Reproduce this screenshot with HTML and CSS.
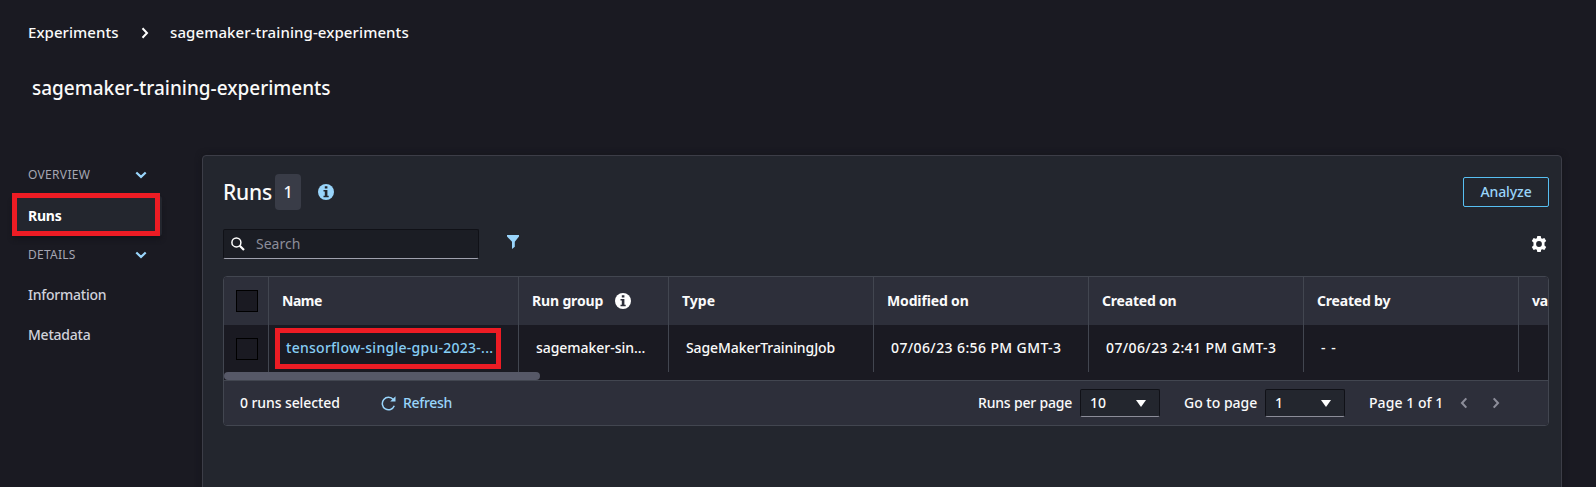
FILE: index.html
```
<!DOCTYPE html>
<html lang="en">
<head>
<meta charset="utf-8">
<title>sagemaker-training-experiments</title>
<link rel="stylesheet" href="styles.css">
</head>
<body>
<header class="header">
  <nav class="crumbs">
    <span class="crumb-root">Experiments</span>
    <svg class="crumb-sep" width="8" height="12" viewBox="0 0 8 12"><path d="M1.5 1.3 6 6 1.5 10.7" fill="none" stroke="#fff" stroke-width="2"/></svg>
    <span class="crumb-current">sagemaker-training-experiments</span>
  </nav>
  <h1 class="title">sagemaker-training-experiments</h1>
</header>
<div class="layout">
  <aside class="sidebar">
    <div class="group"><span class="ls-overview">OVERVIEW</span><svg width="12" height="8" viewBox="0 0 12 8"><path d="M1.3 1.5 6 5.9 10.7 1.5" fill="none" stroke="#99d5fb" stroke-width="2.2"/></svg></div>
    <div class="item active">Runs<i class="mark mark-nav"></i></div>
    <div class="group group-details"><span class="ls-details">DETAILS</span><svg width="12" height="8" viewBox="0 0 12 8"><path d="M1.3 1.5 6 5.9 10.7 1.5" fill="none" stroke="#99d5fb" stroke-width="2.2"/></svg></div>
    <div class="item">Information</div>
    <div class="item">Metadata</div>
  </aside>
  <main class="panel">
    <div class="panel-head">
      <h2 class="panel-title">Runs</h2>
      <span class="badge">1</span>
      <svg class="info" width="16" height="16" viewBox="0 0 16 16"><circle cx="8" cy="8" r="8" fill="#99d5fb"/><path d="M6.8 2.2h2.6v2.3H6.8zM5.5 6h3.9v5.800h1.300v1.500H5.500v-1.500h1.300V7.500H5.500z" fill="#23262e"/></svg>
      <button class="analyze">Analyze</button>
    </div>
    <div class="tools">
      <div class="search">
        <svg width="14" height="14" viewBox="0 0 14 14"><circle cx="5.4" cy="5.4" r="4.500" fill="none" stroke="#fff" stroke-width="1.500"/><path d="m8.700 8.700 4.300 4.300" stroke="#fff" stroke-width="2.200"/></svg>
        <span>Search</span>
      </div>
      <svg class="filter" width="12" height="14" viewBox="0 0 12 14"><path d="M0 0h12v1.500L7.800 6.800v5L5 14V6.800L0 1.500z" fill="#99d5fb"/></svg>
      <svg class="gear" width="16" height="16" viewBox="0 0 16 16"><path fill-rule="evenodd" fill="#fff" d="M6.300 0h3.400l.5 2.200 1 .6 2.200-.8 1.800 3-1.700 1.500v3L15.200 11l-1.800 3-2.200-.8-1 .6-.5 2.200H6.300l-.5-2.200-1-.6-2.200.8-1.800-3 1.700-1.500v-3L.8 5l1.800-3 2.200.8 1-.6zM8 5.100a2.900 2.900 0 1 0 0 5.800 2.900 2.900 0 0 0 0-5.800z"/></svg>
    </div>
    <section class="table">
      <div class="row head">
        <div class="cell check"><i class="box"></i></div>
        <div class="cell ls-name">Name</div>
        <div class="cell">Run group<svg class="info-sm" width="16" height="16" viewBox="0 0 16 16"><circle cx="8" cy="8" r="8" fill="#fff"/><path d="M6.800 2.200h2.600v2.300H6.800zM5.500 6h3.900v5.800h1.300v1.500H5.500v-1.500h1.300V7.500H5.500z" fill="#2d2f3a"/></svg></div>
        <div class="cell ls-type">Type</div>
        <div class="cell">Modified on</div>
        <div class="cell ls-created">Created on</div>
        <div class="cell ls-created">Created by</div>
        <div class="cell last">va</div>
      </div>
      <div class="row body">
        <div class="cell check"><i class="box"></i></div>
        <div class="cell link">tensorflow-single-gpu-2023-...<i class="mark mark-run"></i></div>
        <div class="cell">sagemaker-sin...</div>
        <div class="cell ls-job">SageMakerTrainingJob</div>
        <div class="cell ls-date">07/06/23 6:56 PM GMT-3</div>
        <div class="cell ls-date">07/06/23 2:41 PM GMT-3</div>
        <div class="cell ls-dash">- -</div>
        <div class="cell last"></div>
      </div>
      <div class="scroll"><div class="thumb"></div></div>
      <footer class="foot">
        <span class="selected">0 runs selected</span>
        <svg class="refresh-icon" width="15" height="15" viewBox="0 0 15 15"><path d="M12.300 3.600A6.200 6.200 0 1 0 13.300 9.800" fill="none" stroke="#99d5fb" stroke-width="1.500"/><path d="M14.500.2v5.300H9.200z" fill="#99d5fb"/></svg>
        <span class="refresh">Refresh</span>
        <span class="per-page">Runs per page</span>
        <div class="select">10<svg width="10" height="7" viewBox="0 0 10 7"><path d="M0 0h10L5 7z" fill="#fff"/></svg></div>
        <span class="goto">Go to page</span>
        <div class="select">1<svg width="10" height="7" viewBox="0 0 10 7"><path d="M0 0h10L5 7z" fill="#fff"/></svg></div>
        <span class="page-of">Page 1 of 1</span>
        <svg class="prev" width="8" height="12" viewBox="0 0 8 12"><path d="M6.300 1.400 2 6l4.300 4.600" fill="none" stroke="#8c8d99" stroke-width="2.100"/></svg>
        <svg class="next" width="8" height="12" viewBox="0 0 8 12"><path d="M1.700 1.400 6 6l-4.300 4.600" fill="none" stroke="#8c8d99" stroke-width="2.100"/></svg>
      </footer>
    </section>
  </main>
</div>
</body>
</html>
```
FILE: styles.css
```
* { box-sizing: border-box; }
body {
  margin: 0;
  height: 487px;
  overflow: hidden;
  background: #1a1a22;
  color: #fafafa;
  font: 500 14px/20px "Noto Sans", sans-serif;
}
svg { display: block; flex: none; }
span, h1, h2 { white-space: nowrap; }
.header { height: 155px; padding: 22px 0 0 28px; }
.crumbs { display: flex; align-items: center; height: 20px; font-size: 15px; }
.crumb-root { width: 113px; letter-spacing: 0.05px; }
.crumb-sep { margin: 2px 21px 0 0; }
.crumb-current { letter-spacing: 0.09px; }
.title { margin: 34px 0 0 4px; font-size: 19px; font-weight: 500; line-height: 24px; letter-spacing: -0.02px; }
.layout { display: flex; height: 340px; }
.sidebar { width: 202px; padding-top: 10px; color: #d0d1da; }
.group {
  display: flex;
  align-items: center;
  justify-content: space-between;
  height: 20px;
  padding: 0 55px 0 28px;
  font-size: 12px;
  font-weight: 400;
  color: #a5a6b2;
}
.group-details { margin: 9px 0 10px; }
.ls-overview { letter-spacing: 0.32px; }
.ls-details { letter-spacing: 0.25px; }
.item { height: 40px; padding-left: 28px; line-height: 40px; letter-spacing: -0.23px; }
.active {
  position: relative;
  width: 150px;
  height: 40px;
  margin: 11px 0 0 12px;
  padding-left: 16px;
  background: #23262e;
  border-radius: 3px;
  box-shadow: 0 4px 5px -1px #14141a;
  color: #fff;
  font-weight: 700;
}
.mark { position: absolute; border: 5px solid #ed1c24; }
.mark-nav { left: 0; top: -3px; width: 148px; height: 43px; }
.mark-run { left: 6px; top: 3px; width: 226px; height: 41px; }
.panel {
  width: 1360px;
  padding: 18px 12px 0 20px;
  background: #23262e;
  border: 1px solid #3c3d47;
  border-radius: 4px 4px 0 0;
  box-shadow: 0 0 6px #15151b;
}
.panel-head { display: flex; align-items: center; height: 36px; }
.panel-title { width: 52px; margin: 0; font-size: 21px; font-weight: 500; line-height: 30px; letter-spacing: -0.2px; }
.badge {
  width: 26px;
  height: 36px;
  background: #393c47;
  border-radius: 4px;
  font-size: 16px;
  line-height: 36px;
  text-align: center;
}
.info { margin-left: 17px; }
.analyze {
  width: 86px;
  height: 30px;
  margin-left: auto;
  padding: 0;
  background: none;
  border: 1px solid #57bff2;
  border-radius: 2px;
  color: #99d5fb;
  font: inherit;
  letter-spacing: -0.1px;
}
.tools { display: flex; align-items: center; height: 30px; margin-top: 19px; }
.search {
  display: flex;
  align-items: center;
  gap: 11px;
  width: 256px;
  height: 30px;
  padding-left: 7px;
  background: #1b1d24;
  border: 1px solid #101117;
  border-bottom-color: #a0a1ae;
  border-radius: 2px;
  color: #8c8d99;
  font-weight: 400;
}
.filter { margin: -5px 0 0 28px; }
.gear { margin: 0 2px 0 auto; }
.table {
  width: 1326px;
  height: 150px;
  margin-top: 17px;
  overflow: hidden;
  background: #1a1a22;
  border: 1px solid #424650;
  border-radius: 4px;
}
.row { display: grid; grid-template-columns: 45px 250px 150px 205px 215px 215px 215px 1fr; }
.cell { position: relative; display: flex; align-items: center; border-right: 1px solid #424650; white-space: nowrap; }
.last { border-right: 0; }
.head { height: 48px; background: #2d2f3a; font-weight: 700; letter-spacing: -0.15px; }
.head .cell { padding-left: 13px; }
.body { height: 47px; }
.body .cell { padding: 0 0 1px 17px; letter-spacing: -0.04px; }
.row .check, .body .check { padding: 0 0 0 12px; }
.box { width: 22px; height: 22px; background: #1a1a22; border: 1px solid #000; }
.info-sm { margin-left: 12px; }
.head .ls-name { letter-spacing: -0.5px; }
.head .ls-type { letter-spacing: 0; }
.head .ls-created { letter-spacing: -0.2px; }
.body .link { color: #86cdf4; letter-spacing: 0.27px; }
.body .ls-job { letter-spacing: -0.09px; }
.body .ls-date { letter-spacing: 0.39px; }
.body .ls-dash { letter-spacing: 1px; }
.scroll { height: 8px; }
.thumb { width: 316px; height: 8px; background: #565867; border-radius: 4px; }
.foot { display: flex; align-items: center; height: 45px; padding-left: 16px; background: #2d2f3a; border-top: 1px solid #424650; }
.selected { width: 141px; letter-spacing: -0.09px; }
.refresh-icon { margin-right: 7px; }
.refresh { width: 575px; color: #99d5fb; letter-spacing: -0.3px; }
.per-page { width: 102px; letter-spacing: -0.18px; }
.select {
  display: flex;
  align-items: center;
  justify-content: space-between;
  width: 80px;
  height: 28px;
  padding: 0 13px 0 9px;
  background: #23262e;
  border: 1px solid #101117;
  border-bottom-color: #8c8d99;
  border-radius: 2px;
}
.goto { width: 81px; margin-left: 24px; }
.page-of { width: 91px; margin-left: 24px; letter-spacing: 0.06px; }
.next { margin-left: 24px; }
```
